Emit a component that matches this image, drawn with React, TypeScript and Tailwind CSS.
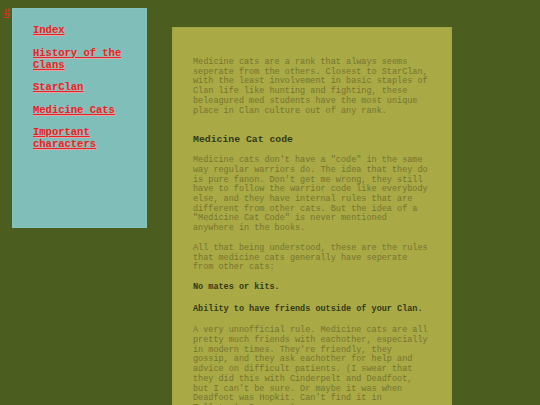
export default function App() {
  const mono = { fontFamily: '"Liberation Mono", "Courier New", monospace' };
  const links = ["Index", "History of the Clans", "StarClan", "Medicine Cats", "Important characters"];
  return (
    <div className="min-h-screen w-full bg-[#4b5e1f] overflow-hidden" style={mono}>
      <div className="flex items-start pl-[4px]">
        <a href="#" className="mt-[9px] w-[8px] text-[5px] leading-[4px] font-bold text-[#e0301e] underline break-all">sk ip</a>
        <nav className="mt-[8px] w-[135px] h-[220px] shrink-0 bg-[#80bfb9] border border-[#86c3bc] pl-[20px] pr-[12px] pt-[15px]">
          <ul className="flex flex-col gap-[10.5px]">
            {links.map((l) => (
              <li key={l} className="text-[10.5px] leading-[12px]">
                <a href="#" className="font-bold text-[#e0262a] underline [text-shadow:1px_1px_1px_#e8a0a0]">{l}</a>
              </li>
            ))}
          </ul>
        </nav>
        <main className="ml-[25px] mt-[27px] w-[280px] shrink-0 bg-[#a9a946] border border-[#a3a443] pl-[20px] pr-[23px] pt-[30px] pb-[40px] text-[8.5px] leading-[9.7px] text-[#76752f]">
          <p className="w-[236px]">Medicine cats are a rank that always seems seperate from the others. Closest to StarClan, with the least involvement in basic staples of Clan life like hunting and fighting, these beleagured med students have the most unique place in Clan culture out of any rank.</p>
          <h2 className="mt-[18px] mb-[10px] text-[9.8px] leading-[12px] font-bold text-[#343a16]">Medicine Cat code</h2>
          <p className="w-[236px]">Medicine cats don't have a "code" in the same way regular warriors do. The idea that they do is pure fanon. Don't get me wrong, they still have to follow the warrior code like everybody else, and they have internal rules that are different from other cats. But the idea of a "Medicine Cat Code" is never mentioned anywhere in the books.</p>
          <p className="w-[236px] mt-[10px]">All that being understood, these are the rules that medicine cats generally have seperate from other cats:</p>
          <p className="w-[236px] mt-[10px] font-bold text-[#343a16]">No mates or kits.</p>
          <p className="w-[236px] mt-[12px] font-bold text-[#343a16]">Ability to have friends outside of your Clan.</p>
          <p className="w-[236px] mt-[12px]">A very unnofficial rule. Medicine cats are all pretty much friends with eachother, especially in modern times. They're friendly, they gossip, and they ask eachother for help and advice on difficult patients. (I swear that they did this with Cinderpelt and Deadfoot, but I can't be sure. Or maybe it was when Deadfoot was Hopkit. Can't find it in Tallstar's Revenge.)</p>
        </main>
      </div>
    </div>
  );
}
